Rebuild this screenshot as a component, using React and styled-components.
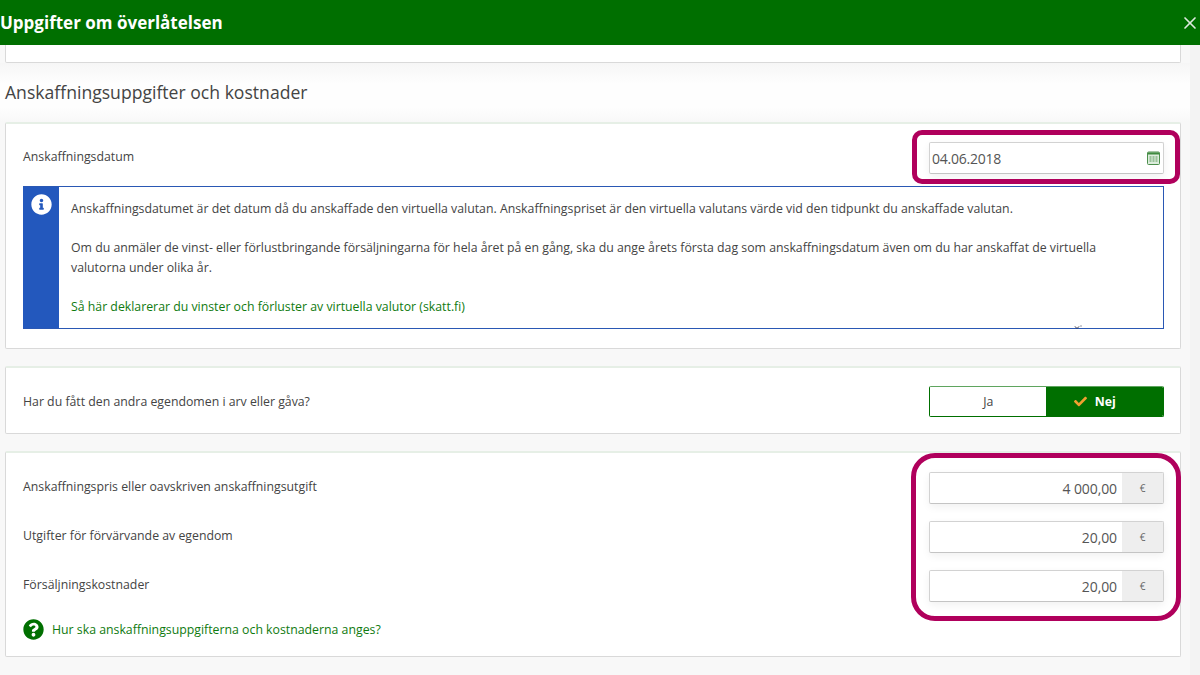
import React from "react";
import styled, { createGlobalStyle } from "styled-components";
import { FaInfoCircle, FaQuestionCircle, FaCheck } from "react-icons/fa";
import { X } from "lucide-react";

const GlobalStyle = createGlobalStyle`
  html, body { margin: 0; padding: 0; height: 100%; overflow: hidden; }
  body { background: #f8f8f8; font-family: "Open Sans", "Noto Sans", sans-serif; color: #3c3c3c; }
`;

const Page = styled.div`
  position: relative;
  width: 1200px;
  height: 675px;
  overflow: hidden;
  display: flex;
  flex-direction: column;
`;

const Header = styled.header`
  height: 45px;
  flex: none;
  background: #006f00;
  display: flex;
  align-items: center;
  justify-content: space-between;
  color: #fff;
`;

const Title = styled.h1`
  margin: 0;
  font-size: 17px;
  font-weight: 700;
`;

const Body = styled.div`
  flex: 1;
  display: flex;
  justify-content: space-between;
`;

const Content = styled.main`
  width: 1176px;
  margin-left: 5px;
  display: flex;
  flex-direction: column;
`;

const ScrollStrip = styled.div`
  width: 10px;
  background: #f3f3f3;
`;

const Card = styled.section`
  background: #fff;
  border: 1px solid #d9d9d9;
  border-top: 2px solid #e6efe6;
  border-radius: 2px;
  padding: ${(p) => p.$padding || "0 16px 0 17px"};
  height: ${(p) => p.$height};
  margin-bottom: ${(p) => p.$gap || "0"};
  box-sizing: border-box;
`;

const TopCard = styled(Card)`
  border-top: 0;
  height: 18px;
  border-radius: 0 0 2px 2px;
`;

const SectionHeading = styled.h2`
  margin: 0 -9px 0 -5px;
  padding: 0 0 2px 5px;
  height: 59px;
  box-sizing: border-box;
  display: flex;
  align-items: center;
  font-size: 17.6px;
  font-weight: 400;
  color: #444;
  background: linear-gradient(#f6f6f6, #fefefe 35%, #fefefe 75%, #f8f8f8);
`;

const Row = styled.div`
  display: flex;
  align-items: center;
  justify-content: space-between;
  height: ${(p) => p.$height || "32px"};
  margin-bottom: ${(p) => p.$gap || "0"};
`;

const Label = styled.label`
  font-size: 12.3px;
  color: #444;
  position: relative;
  top: ${(p) => p.$offset || "-2px"};
`;

const InputBox = styled.div`
  width: 235px;
  height: 32px;
  box-sizing: border-box;
  display: flex;
  align-items: center;
  justify-content: ${(p) => (p.$date ? "space-between" : "flex-end")};
  background: #fff;
  border: 1px solid #d2d2d2;
  border-bottom-color: #c4c4c4;
  border-radius: 2px;
  box-shadow: 0 3px 8px rgba(0, 0, 0, 0.06);
  font-size: 14px;
  letter-spacing: ${(p) => (p.$date ? "-0.25px" : "-0.1px")};
  color: #555;
  padding-left: ${(p) => (p.$date ? "2px" : "0")};
  padding-right: ${(p) => (p.$date ? "3px" : "0")};
`;

const Value = styled.span`
  padding-right: 5px;
`;

const Unit = styled.span`
  width: 41px;
  height: 100%;
  background: #eee;
  display: flex;
  align-items: center;
  justify-content: center;
  font-size: 10px;
  color: #666;
`;

const InfoBox = styled.div`
  position: relative;
  display: flex;
  height: 143px;
  border: 1px solid #2a58b4;
  border-left: 0;
  box-sizing: border-box;
  margin-top: 12px;
`;

const InfoSide = styled.div`
  width: 36px;
  flex: none;
  background: #2358bd;
  display: flex;
  justify-content: center;
  padding-top: 7px;
  box-sizing: border-box;
  color: #fff;
  font-size: 21px;
`;

const InfoText = styled.div`
  padding: 12px 62px 0 12px;
  font-size: 12.3px;
  line-height: 19.5px;
  color: #444;
`;

const GreenLink = styled.a`
  color: #0f7a0f;
  text-decoration: none;
  font-size: 12.3px;
`;

const Cursor = styled.svg`
  position: absolute;
  left: 1051px;
  bottom: -2px;
`;

const Toggle = styled.div`
  width: 235px;
  height: 31px;
  display: flex;
  box-sizing: border-box;
  border: 1px solid #006f00;
  border-top-color: #5fa55f;
  border-radius: 2px;
  overflow: hidden;
  font-size: 12.3px;
`;

const ToggleOption = styled.div`
  width: ${(p) => (p.$active ? "117px" : "117px")};
  display: flex;
  align-items: center;
  justify-content: center;
  gap: 8px;
  padding-right: ${(p) => (p.$active ? "20px" : "0")};
  box-sizing: border-box;
  background: ${(p) => (p.$active ? "#006f00" : "#fff")};
  color: ${(p) => (p.$active ? "#fff" : "#444")};
  font-weight: ${(p) => (p.$active ? 700 : 400)};
  font-size: 12.3px;
`;

const CheckMark = styled(FaCheck)`
  color: #f0a030;
  font-size: 13px;
`;

const HelpRow = styled.div`
  display: flex;
  align-items: center;
  gap: 8px;
  color: #006f00;
  font-size: 21px;
  height: 21px;
`;

const Highlight = styled.div`
  position: absolute;
  left: ${(p) => p.$left}px;
  top: ${(p) => p.$top}px;
  width: ${(p) => p.$width}px;
  height: ${(p) => p.$height}px;
  box-sizing: border-box;
  border: 5px solid #b0005c;
  border-radius: ${(p) => p.$radius}px;
  pointer-events: none;
`;

const CalendarIcon = () => (
  <svg width="13" height="14" viewBox="0 0 13 14">
    <rect x="0.5" y="1" width="12" height="12.5" rx="1" fill="#dcecdc" stroke="#4c8f4c" />
    <rect x="1" y="1.5" width="11" height="2" fill="#3f8a3f" />
    <path d="M2.5 6h2M5.5 6h2M8.5 6h2M2.5 8h2M5.5 8h2M8.5 8h2M2.5 10h2M5.5 10h2M8.5 10h2" stroke="#5d9a5d" strokeWidth="1" />
  </svg>
);

const AmountRow = ({ label, value, gap }) => (
  <Row $gap={gap}>
    <Label>{label}</Label>
    <InputBox>
      <Value>{value}</Value>
      <Unit>€</Unit>
    </InputBox>
  </Row>
);

export default function App() {
  return (
    <Page>
      <GlobalStyle />
      <Header>
        <Title>Uppgifter om överlåtelsen</Title>
        <X size={20} strokeWidth={2} color="#dfe9df" />
      </Header>
      <Body>
        <Content>
          <TopCard />
          <SectionHeading>Anskaffningsuppgifter och kostnader</SectionHeading>
          <Card $height="227px" $gap="17px" $padding="18px 16px 0 17px">
            <Row>
              <Label>Anskaffningsdatum</Label>
              <InputBox $date>
                04.06.2018
                <CalendarIcon />
              </InputBox>
            </Row>
            <InfoBox>
              <InfoSide>
                <FaInfoCircle />
              </InfoSide>
              <InfoText>
                Anskaffningsdatumet är det datum då du anskaffade den virtuella valutan. Anskaffningspriset är den virtuella valutans värde vid den tidpunkt du anskaffade valutan.
                <br />
                <br />
                Om du anmäler de vinst- eller förlustbringande försäljningarna för hela året på en gång, ska du ange årets första dag som anskaffningsdatum även om du har anskaffat de virtuella valutorna under olika år.
                <br />
                <br />
                <GreenLink href="#">Så här deklarerar du vinster och förluster av virtuella valutor (skatt.fi)</GreenLink>
              </InfoText>
              <Cursor width="8" height="5" viewBox="0 0 8 5">
                <path d="M1 1.5c1 2 3 2 4 0M6.5 1h1" fill="none" stroke="#334" strokeWidth="1" />
              </Cursor>
            </InfoBox>
          </Card>
          <Card $height="68px" $gap="17px" $padding="18px 16px 0 17px">
            <Row $height="31px">
              <Label $offset="0px">Har du fått den andra egendomen i arv eller gåva?</Label>
              <Toggle>
                <ToggleOption>Ja</ToggleOption>
                <ToggleOption $active>
                  <CheckMark />
                  Nej
                </ToggleOption>
              </Toggle>
            </Row>
          </Card>
          <Card $height="206px" $padding="19px 16px 0 17px">
            <AmountRow label="Anskaffningspris eller oavskriven anskaffningsutgift" value="4 000,00" gap="17px" />
            <AmountRow label="Utgifter för förvärvande av egendom" value="20,00" gap="17px" />
            <AmountRow label="Försäljningskostnader" value="20,00" gap="17px" />
            <HelpRow>
              <FaQuestionCircle />
              <GreenLink href="#">Hur ska anskaffningsuppgifterna och kostnaderna anges?</GreenLink>
            </HelpRow>
          </Card>
        </Content>
        <ScrollStrip />
      </Body>
      <Highlight $left={912} $top={130} $width={268} $height={54} $radius={10} />
      <Highlight $left={911} $top={453} $width={270} $height={168} $radius={24} />
    </Page>
  );
}
